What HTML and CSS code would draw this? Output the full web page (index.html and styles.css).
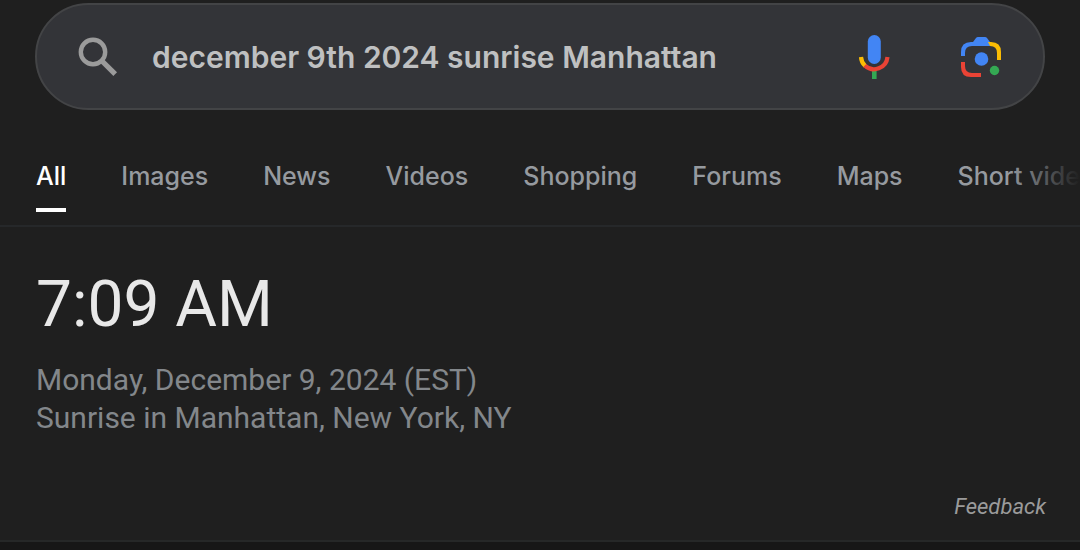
FILE: index.html
```html
<!DOCTYPE html>
<html lang="en">
   <head>
      <title>december 9th 2024 sunrise Manhattan</title>
      <meta charset="utf-8">
      <meta name="viewport" content="width=device-width, initial-scale=1">
      <link rel="stylesheet" href="styles.css">
   </head>

   <body>
      <form class="search" action="/search">
         <button class="icon-btn" type="submit" aria-label="Search">
            <svg width="40" height="40" viewBox="0 0 40 40" fill="none" stroke="#9b9b9b">
               <circle cx="15" cy="15" r="12.2" stroke-width="4.4"/>
               <path d="M24 24L37.2 37.2" stroke-width="5.2"/>
            </svg>
         </button>
         <input class="query" type="text" name="q" aria-label="Search query" value="december 9th 2024 sunrise Manhattan">
         <button class="icon-btn" type="button" aria-label="Search by voice">
            <svg width="32" height="46" viewBox="0 0 32 46">
               <path d="M14 37h4.600v8H14z" fill="#34a853"/>
               <path d="M3 23a13.500 13.500 0 0 0 4.200 9" fill="none" stroke="#fbbc04" stroke-width="4.200"/>
               <path d="M6.800 31.500A13.500 13.500 0 0 0 29.500 23" fill="none" stroke="#ea4335" stroke-width="4.200"/>
               <rect x="9.800" y="1" width="13" height="29" rx="6.500" fill="#4285f4"/>
            </svg>
         </button>
         <button class="icon-btn lens" type="button" aria-label="Search by image">
            <svg width="42" height="42" viewBox="0 0 42 42">
               <path d="M1 20v-4Q1 6 11 6h2l3-4q.7-1 2-1h7q1.300 0 2 1l3 4v4H12Q5 10 5 17v3z" fill="#4285f4"/>
               <path d="M29 6h2q10 0 10 10v8h-4v-7q0-7-7-7l-2-4z" fill="#fbbc04"/>
               <path d="M1 26h4v4q0 7 7 7h9v4H11Q1 41 1 31z" fill="#ea4335"/>
               <circle cx="21.500" cy="23" r="6.800" fill="#4285f4"/>
               <circle cx="34.500" cy="34.500" r="4.700" fill="#34a853"/>
            </svg>
         </button>
      </form>

      <nav class="tabs">
         <a class="tab active" href="#">All</a>
         <a class="tab" href="#">Images</a>
         <a class="tab" href="#">News</a>
         <a class="tab" href="#">Videos</a>
         <a class="tab" href="#">Shopping</a>
         <a class="tab" href="#">Forums</a>
         <a class="tab" href="#">Maps</a>
         <a class="tab" href="#">Short videos</a>
      </nav>

      <main class="answer">
         <h1 class="time">7:09 AM</h1>
         <p class="detail">Monday, December 9, 2024 (EST)</p>
         <p class="detail">Sunrise in Manhattan, New York, NY</p>
         <a class="feedback" href="#">Feedback</a>
      </main>
   </body>
</html>
```
FILE: styles.css
```css
* {box-sizing: border-box;}
body {margin: 0; padding-top: 3px; background-color: #171717; background-image: linear-gradient(#1f1f1f, #1f1f1f); background-size: 100% 540px; background-repeat: no-repeat; font-family: Roboto, "Liberation Sans", sans-serif; overflow-x: hidden;}
a {text-decoration: none;}

.search {display: flex; align-items: center; height: 107px; margin: 0 35px; padding: 0 41px; background-color: #333438; border: 2px solid #434446; border-radius: 54px;}
.icon-btn {display: flex; flex: none; padding: 0; background: none; border: 0;}
.query {flex: 1; min-width: 0; margin: 0 34px; padding: 0; background: none; border: 0; outline: 0; color: #bfc0c1; font-family: Inter, sans-serif; font-weight: 600; font-size: 30px; line-height: 40px;}
.lens {margin-left: 70px;}

.tabs {display: flex; gap: 55px; height: 117px; padding: 48px 0 0 36px; border-bottom: 2px solid #26282a; overflow: hidden; position: relative;}
.tabs::after {content: ""; position: absolute; top: 0; right: 0; bottom: -2px; width: 72px; background-image: linear-gradient(to right, rgba(31,31,31,0), #1f1f1f);}
.tab {flex: none; height: 54px; padding-top: 1px; color: #969a9f; font-family: Inter, sans-serif; font-weight: 500; font-size: 25px; line-height: 34px; white-space: nowrap;}
.active {color: #fff; border-bottom: 4px solid #fff;}

.answer {display: flex; flex-direction: column; padding: 40px 34px 19px 36px; border-bottom: 2px solid #262828; background-color: #1f1f1f;}
.time {margin: 0 0 18px; color: #e8e8e8; font-weight: 400; font-size: 64px; line-height: 76px;}
.detail {margin: 0; color: #83878b; font-size: 30px; line-height: 38px;}
.feedback {align-self: flex-end; margin-top: 56px; color: #9b9b9b; font-style: italic; font-size: 22px; line-height: 28px;}
```
